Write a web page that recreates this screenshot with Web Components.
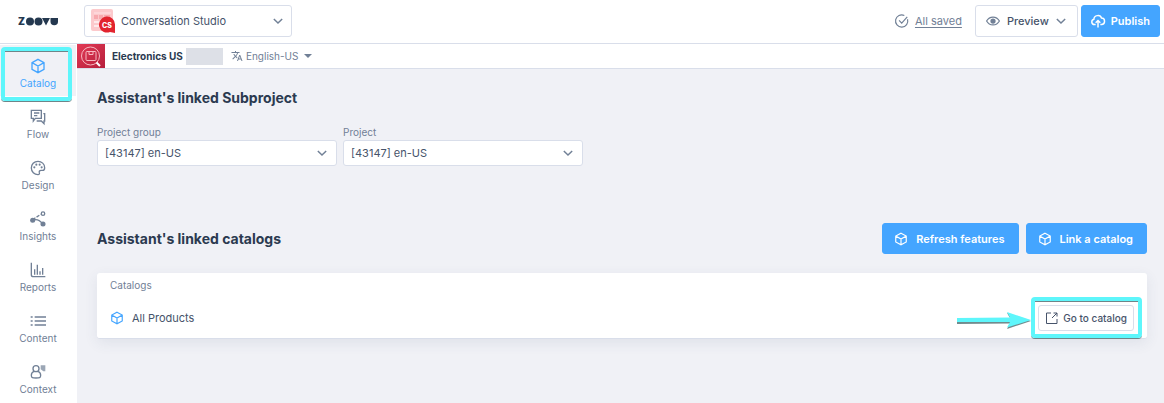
<!DOCTYPE html>
<html lang="en">
<head>
<meta charset="utf-8">
<meta name="viewport" content="width=device-width, initial-scale=1">
<title>Conversation Studio</title>
<style>
  html, body {
    margin: 0;
    min-height: 100%;
    background: #f0f1f6;
  }
  body {
    --ink: #2b3a50;
    --text: #46536a;
    --muted: #718096;
    --line: #d9deea;
    --blue: #44a5ff;
    --canvas: #f0f1f6;
    --mark: #5ef6fb;
    font-family: Inter, "Open Sans", sans-serif;
    font-size: 11px;
    line-height: 14px;
    color: var(--text);
  }
</style>
</head>
<body>
<studio-app></studio-app>

<script>
const icons = {
  cube: '<path d="M12 2l9 5v10l-9 5-9-5V7zM3 7l9 5 9-5M12 12v10"/>',
  flow: '<path d="M2 2h15v12H8l-3 4v-4H2zM6 6h8M6 10h5M20 7h2v11h-1v4l-4-4h-7"/>',
  palette: '<path d="M12 2C6 2 2 6.500 2 12s4.500 10 10 10c2 0 2.500-1.500 2-3-.6-2 .5-3.500 2.500-3.500H19c2 0 3-1.500 3-4C22 6 17.500 2 12 2z"/><g fill="currentColor" stroke="none"><circle cx="6.500" cy="11" r="1.600"/><circle cx="9.500" cy="7" r="1.600"/><circle cx="14.500" cy="7" r="1.600"/><circle cx="17.500" cy="11" r="1.600"/></g>',
  insights: '<path d="M4 14c4-2 10-1 15 5"/><path d="M4 13L16 5" stroke-dasharray="5 2"/><circle cx="19.500" cy="4" r="2.600"/><g fill="currentColor" stroke="none"><circle cx="4" cy="14" r="3.800"/><circle cx="19.500" cy="19.500" r="3.800"/></g>',
  reports: '<path d="M2 1v18q0 3 3 3h18M7 11v8M11 4v15M15 14v5M19 9v10"/>',
  content: '<path d="M7 6h17M7 12h17M7 18h17" stroke-width="2.600"/><path d="M1 6h3M1 12h3M1 18h3" stroke-width="2.600"/>',
  context: '<circle cx="9" cy="7" r="4.500"/><path d="M6 11c-3 1-4 3-4 6 0 4 2 4 7 4s7 0 7-4c0-3-1-5-4-6"/><path d="M16 2h7v9h-3l-4-3z" fill="currentColor" stroke="none" opacity=".7"/>',
  chevron: '<path d="M2 7l10 10 10-10" stroke-width="3.500"/>',
  caret: '<path d="M0 6h24L12 18z" fill="currentColor" stroke="none"/>',
  check: '<path d="M21.500 9A10.500 10.500 0 1 1 16 2.500M7 11l4.500 4.500L21 5"/>',
  eye: '<path d="M1 12C6 3 18 3 23 12 18 21 6 21 1 12z"/><circle cx="12" cy="12" r="4.500" fill="currentColor" stroke="none"/>',
  upload: '<path d="M8 18H6c-6 0-6-8-1-9 0-7 11-9 13-2 7 0 7 11 0 11h-2M12 23V12M8 15l4-4 4 4" stroke-width="2.500"/>',
  external: '<path d="M10 2H1v21h21v-9"/><path d="M12 12L22 2M15 2h7v7"/>',
  translate: '<path fill="currentColor" stroke="none" d="M12.87 15.07l-2.54-2.51.03-.03c1.74-1.94 2.98-4.17 3.71-6.53H17V4h-7V2H8v2H1v1.99h11.17C11.5 7.92 10.44 9.75 9 11.35 8.07 10.32 7.3 9.19 6.69 8h-2c.73 1.63 1.73 3.17 2.98 4.56l-5.09 5.02L4 19l5-5 3.11 3.11.76-2.04zM18.5 10h-2L12 22h2l1.12-3h4.75L21 22h2l-4.5-12zm-2.62 7l1.62-4.33L19.12 17h-3.24z"/>'
};

customElements.define('studio-icon', class StudioIcon extends HTMLElement {
  constructor() {
    super();
    this.attachShadow({mode: 'open'});
  }

  connectedCallback() {
    this.shadowRoot.innerHTML = `
    <style>
      :host {
        display: block;
        flex: none;
        width: var(--icon-size, 14px);
        height: var(--icon-size, 14px);
      }
      svg {
        display: block;
        width: 100%;
        height: 100%;
        overflow: visible;
      }
    </style>
    <svg viewBox="0 0 24 24" fill="none" stroke="currentColor" stroke-width="2" aria-hidden="true">${icons[this.getAttribute('name')]}</svg>
    `
  }
});

// bright frame laid over whatever is slotted in
customElements.define('mark-frame', class MarkFrame extends HTMLElement {
  constructor() {
    super();
    this.attachShadow({mode: 'open'});
    this.shadowRoot.innerHTML = `
    <style>
      :host {
        display: block;
        position: relative;
      }
      .frame {
        position: absolute;
        inset: var(--frame-inset, -8px);
        box-sizing: border-box;
        border: 4px solid var(--mark);
        border-radius: 4px;
        box-shadow: 0 1px 0 #6f8589, inset 0 1px 0 #6f8589;
        pointer-events: none;
      }
    </style>
    <slot></slot>
    <div class="frame"></div>
    `
  }
});

customElements.define('nav-item', class NavItem extends HTMLElement {
  constructor() {
    super();
    this.attachShadow({mode: 'open'});
  }

  connectedCallback() {
    this.shadowRoot.innerHTML = `
    <style>
      :host {
        display: block;
        height: 51px;
      }
      a {
        --icon-size: 16px;
        display: flex;
        flex-direction: column;
        align-items: center;
        gap: 2px;
        box-sizing: border-box;
        height: 100%;
        padding-top: 13px;
        color: var(--muted);
        font-size: 10px;
        text-decoration: none;
      }
      :host([active]) a {
        color: var(--blue);
        background: var(--canvas);
      }
    </style>
    <a href="#${this.getAttribute('icon')}">
      <studio-icon name="${this.getAttribute('icon')}"></studio-icon>
      <slot></slot>
    </a>
    `
  }
});

customElements.define('side-nav', class SideNav extends HTMLElement {
  constructor() {
    super();
    this.attachShadow({mode: 'open'});
    this.shadowRoot.innerHTML = `
    <style>
      :host {
        display: block;
        background: #fff;
      }
      nav {
        display: flex;
        flex-direction: column;
        padding: 1px 1px 0 0;
      }
      mark-frame {
        --frame-inset: 2px 4px -5px 1px;
      }
    </style>
    <nav aria-label="Main">
      <mark-frame><nav-item icon="cube" active>Catalog</nav-item></mark-frame>
      <nav-item icon="flow">Flow</nav-item>
      <nav-item icon="palette">Design</nav-item>
      <nav-item icon="insights">Insights</nav-item>
      <nav-item icon="reports">Reports</nav-item>
      <nav-item icon="content">Content</nav-item>
      <nav-item icon="context">Context</nav-item>
    </nav>
    `
  }
});

customElements.define('action-button', class ActionButton extends HTMLElement {
  constructor() {
    super();
    this.attachShadow({mode: 'open'});
  }

  connectedCallback() {
    const more = this.hasAttribute('more') ? '<studio-icon name="chevron" class="more"></studio-icon>' : '';
    this.shadowRoot.innerHTML = `
    <style>
      :host {
        display: block;
        height: 31px;
      }
      button {
        display: flex;
        align-items: center;
        gap: 8px;
        box-sizing: border-box;
        height: 100%;
        padding: 0 13px 0 11px;
        border: 1px solid var(--blue);
        border-radius: 3px;
        background: var(--blue);
        color: #fff;
        font: inherit;
        font-weight: 600;
        white-space: nowrap;
        cursor: pointer;
      }
      button:hover {
        filter: brightness(.97);
      }
      :host([plain]) button {
        border-color: var(--line);
        background: #fff;
        color: var(--text);
        font-weight: 500;
      }
      :host([toolbar]) {
        height: 32px;
      }
      :host([toolbar]) button {
        padding: 0 9px;
        gap: 6px;
      }
      :host([more]) button {
        padding: 0 11px 0 10px;
        gap: 7px;
      }
      :host([small]) {
        --icon-size: 12px;
        height: 26px;
      }
      :host([small]) button {
        padding: 0 6px 0 7px;
        gap: 5px;
        font-size: 10px;
      }
      .more {
        --icon-size: 10px;
      }
      :host([plain][toolbar]) studio-icon {
        color: var(--muted);
      }
    </style>
    <button type="button">
      <studio-icon name="${this.getAttribute('icon')}"></studio-icon>
      <slot></slot>
      ${more}
    </button>
    `
  }
});

customElements.define('select-field', class SelectField extends HTMLElement {
  constructor() {
    super();
    this.attachShadow({mode: 'open'});
  }

  connectedCallback() {
    this.shadowRoot.innerHTML = `
    <style>
      :host {
        display: block;
        width: 240px;
      }
      label {
        display: block;
        margin-bottom: 1px;
        color: var(--muted);
        font-size: 10px;
      }
      .box {
        display: grid;
        align-items: center;
      }
      select, studio-icon {
        grid-area: 1 / 1;
      }
      select {
        appearance: none;
        box-sizing: border-box;
        width: 100%;
        height: 26px;
        padding: 0 28px 0 7px;
        border: 1px solid var(--line);
        border-radius: 3px;
        background: #fff;
        color: var(--text);
        font: inherit;
      }
      studio-icon {
        --icon-size: 10px;
        justify-self: end;
        margin-right: 10px;
        color: var(--muted);
        pointer-events: none;
      }
    </style>
    <label for="field">${this.getAttribute('label')}</label>
    <div class="box">
      <select id="field"><option>${this.getAttribute('value')}</option></select>
      <studio-icon name="chevron"></studio-icon>
    </div>
    `
  }
});

customElements.define('app-header', class AppHeader extends HTMLElement {
  constructor() {
    super();
    this.attachShadow({mode: 'open'});
    this.shadowRoot.innerHTML = `
    <style>
      :host {
        display: flex;
        align-items: center;
        padding: 5px 4px 6px 0;
        border-bottom: 1px solid var(--line);
        background: #fff;
      }
      .logo {
        width: 84px;
        flex: none;
      }
      .logo svg {
        display: block;
        margin-left: 18px;
      }
      .product {
        display: grid;
        align-items: center;
        width: 208px;
      }
      .product > * {
        grid-area: 1 / 1;
      }
      .product svg {
        margin-left: 7px;
        pointer-events: none;
      }
      .product studio-icon {
        --icon-size: 10px;
        justify-self: end;
        margin-right: 9px;
        color: var(--muted);
        pointer-events: none;
      }
      select {
        appearance: none;
        box-sizing: border-box;
        width: 100%;
        height: 32px;
        padding: 0 24px 0 36px;
        border: 1px solid var(--line);
        border-radius: 3px;
        background: #fff;
        color: var(--text);
        font: inherit;
      }
      .actions {
        display: flex;
        align-items: center;
        gap: 3px;
        margin-left: auto;
      }
      .saved {
        display: flex;
        align-items: center;
        gap: 6px;
        margin-right: 10px;
        color: var(--muted);
      }
      .saved a {
        color: inherit;
        text-underline-offset: 2px;
      }
    </style>
    <div class="logo">
      <svg width="42" height="17" viewBox="0 -4 42 17" fill="#24384f" role="img" aria-label="zoovu">
        <text x="0" y="8" font-family="Inter, sans-serif" font-weight="900" font-size="10">Z</text>
        <circle cx="12" cy="4.500" r="4"/>
        <circle cx="20.500" cy="4.500" r="4"/>
        <path d="M24 1h8l-4 7.500z"/>
        <path d="M32.500 1H40v3.500a3.700 3.700 0 0 1-7.500 0z"/>
      </svg>
    </div>
    <div class="product">
      <select aria-label="Product"><option>Conversation Studio</option></select>
      <svg width="25" height="25" viewBox="0 0 25 25" aria-hidden="true">
        <rect width="22" height="22" rx="2" fill="#fcc9cc"/>
        <path d="M3 4h17" stroke="#fff" stroke-opacity=".5"/>
        <path d="M3 6h4v4H3zM8 6h4v4H8zM13 6h6v4h-6z" fill="#f7a9ae"/>
        <path d="M3 12h6v2H3zM3 16h5v2H3z" fill="#fff" fill-opacity=".6"/>
        <path d="M24 24l-5-1a8 8 0 1 1 5-7z" fill="#e2242f"/>
        <text x="11" y="19" fill="#fff" font-family="Inter, sans-serif" font-size="7" font-weight="800">CS</text>
      </svg>
      <studio-icon name="chevron"></studio-icon>
    </div>
    <div class="actions">
      <div class="saved">
        <studio-icon name="check"></studio-icon>
        <a href="#saved">All saved</a>
      </div>
      <action-button icon="eye" plain toolbar more>Preview</action-button>
      <action-button icon="upload" toolbar>Publish</action-button>
    </div>
    `
  }
});

customElements.define('project-bar', class ProjectBar extends HTMLElement {
  constructor() {
    super();
    this.attachShadow({mode: 'open'});
    this.shadowRoot.innerHTML = `
    <style>
      :host {
        display: flex;
        align-items: center;
        border-bottom: 1px solid var(--line);
        background: #fff;
        font-size: 10px;
      }
      .avatar {
        display: block;
        margin-right: 7px;
      }
      strong {
        color: var(--ink);
        font-weight: 700;
      }
      .blank {
        width: 37px;
        height: 17px;
        margin: 0 8px 0 3px;
        background: #dde0e7;
      }
      .language {
        --icon-size: 12px;
        display: flex;
        align-items: center;
        gap: 3px;
        color: var(--muted);
      }
      select {
        appearance: none;
        padding: 0;
        border: none;
        background: transparent;
        color: inherit;
        font: inherit;
      }
      .caret {
        --icon-size: 8px;
        margin-left: 2px;
      }
    </style>
    <svg class="avatar" width="28" height="24" viewBox="0 0 28 24" aria-hidden="true">
      <defs>
        <linearGradient id="red" x2="1" y2="1"><stop stop-color="#e23a55"/><stop offset="1" stop-color="#b61f3c"/></linearGradient>
      </defs>
      <path d="M0 0h28v24H0z" fill="url(#red)"/>
      <g fill="none" stroke="#f7b9c2">
        <circle cx="13.500" cy="12" r="9"/>
        <rect x="9" y="7.500" width="10" height="9" rx="1"/>
        <path d="M12 7.500v3h4v-3"/>
        <path d="M19.500 18.500l3.500 3.500" stroke="#fff" stroke-width="2"/>
      </g>
    </svg>
    <strong>Electronics US</strong>
    <div class="blank"></div>
    <div class="language">
      <studio-icon name="translate"></studio-icon>
      <select aria-label="Language"><option>English-US</option></select>
      <studio-icon name="caret" class="caret"></studio-icon>
    </div>
    `
  }
});

customElements.define('catalog-card', class CatalogCard extends HTMLElement {
  constructor() {
    super();
    this.attachShadow({mode: 'open'});
    this.shadowRoot.innerHTML = `
    <style>
      :host {
        display: block;
        padding: 5px 13px 7px;
        border-bottom: 1px solid var(--line);
        border-radius: 3px;
        background: #fff;
        box-shadow: 0 4px 14px rgba(60, 75, 110, .09);
      }
      .head {
        color: var(--muted);
        font-size: 10px;
      }
      .row {
        display: flex;
        align-items: center;
        gap: 8px;
        margin-top: 13px;
      }
      .row > studio-icon {
        color: var(--blue);
      }
      mark-frame {
        --frame-inset: -8px -8px -7px -7px;
        margin-left: auto;
      }
      .arrow {
        position: absolute;
        right: 100%;
        top: 6px;
        margin-right: 6px;
      }
    </style>
    <div class="head">Catalogs</div>
    <div class="row">
      <studio-icon name="cube"></studio-icon>
      <span>All Products</span>
      <mark-frame>
        <action-button icon="external" plain small>Go to catalog</action-button>
        <svg class="arrow" width="75" height="18" viewBox="0 0 75 18" aria-hidden="true">
          <path d="M0 8l53-1-3-5 24 8-24 8 3-5.500-53 .5z" fill="#718b8e"/>
          <path d="M0 7l53-.5L50 1l24 8-24 7.500 3-5.500H0z" fill="#5ef6fb"/>
        </svg>
      </mark-frame>
    </div>
    `
  }
});

customElements.define('studio-app', class StudioApp extends HTMLElement {
  constructor() {
    super();
    this.attachShadow({mode: 'open'});
    this.shadowRoot.innerHTML = `
    <style>
      :host {
        display: grid;
        grid-template-columns: 77px 1fr;
        grid-template-rows: auto 1fr;
        min-height: 100vh;
      }
      app-header {
        grid-column: 1 / -1;
      }
      main {
        padding: 19px 17px 19px 20px;
      }
      h2 {
        margin: 0;
        color: var(--ink);
        font-size: 14px;
        font-weight: 700;
        line-height: 20px;
      }
      .fields {
        display: flex;
        flex-wrap: wrap;
        gap: 6px;
        margin-top: 17px;
      }
      .bar {
        display: flex;
        align-items: center;
        gap: 7px;
        margin: 57px 0 19px;
      }
      .bar h2 {
        margin-right: auto;
      }
    </style>
    <app-header></app-header>
    <side-nav></side-nav>
    <div>
      <project-bar></project-bar>
      <main>
        <h2>Assistant's linked Subproject</h2>
        <div class="fields">
          <select-field label="Project group" value="[43147] en-US"></select-field>
          <select-field label="Project" value="[43147] en-US"></select-field>
        </div>
        <div class="bar">
          <h2>Assistant's linked catalogs</h2>
          <action-button icon="cube">Refresh features</action-button>
          <action-button icon="cube">Link a catalog</action-button>
        </div>
        <catalog-card></catalog-card>
      </main>
    </div>
    `
  }
});
</script>
</body>
</html>
